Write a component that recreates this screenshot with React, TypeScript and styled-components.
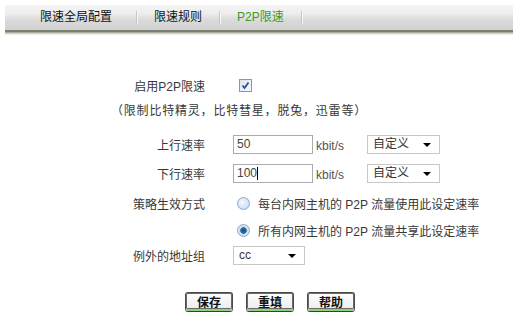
import styled, { createGlobalStyle } from 'styled-components';

const GlobalStyle = createGlobalStyle`
  html, body {
    margin: 0;
    padding: 0;
    background: #ffffff;
  }
  body {
    font-family: "Liberation Sans", "Noto Sans CJK SC", sans-serif;
    font-size: 12px;
    color: #333333;
  }
`;

const Page = styled.div`
  width: 527px;
  height: 335px;
  padding-top: 5px;
  box-sizing: border-box;
  overflow: hidden;
`;

const TabBar = styled.div`
  margin: 0 14px 0 5px;
  height: 25px;
  display: flex;
  align-items: center;
  padding-left: 18px;
  background: linear-gradient(#f6f6f6 0%, #ececec 35%, #dadada 60%, #d2d2d2 100%);
  border-bottom: 2px solid #7c8070;
  box-shadow: 0 1px 0 #a9ad9c, 0 2px 0 #d0d3c6, 0 3px 0 #eceee6;
`;

const Tab = styled.div<{ $active?: boolean }>`
  padding: 0 17px;
  height: 13px;
  line-height: 13px;
  font-size: 12px;
  color: ${({ $active }) => ($active ? '#3c9a22' : '#111111')};
  border-right: 1px solid #c6c6c6;
  box-shadow: 1px 0 0 #f8f8f8;

  &:first-child {
    padding-right: 24px;
  }
`;

const Form = styled.div`
  margin-top: 41px;
  padding-left: 105px;
  display: flex;
  flex-direction: column;
`;

const Row = styled.div<{ $gap?: number }>`
  display: grid;
  grid-template-columns: 100px 1fr;
  column-gap: 28px;
  height: 24px;
  align-items: center;
  margin-top: ${({ $gap }) => $gap ?? 0}px;
`;

const Label = styled.div`
  text-align: right;
  color: #383838;
  white-space: nowrap;
`;

const Note = styled.div`
  height: 24px;
  line-height: 24px;
  margin-top: 2px;
  padding-left: 6px;
  color: #383838;
  letter-spacing: 0.8px;
`;

const Field = styled.div<{ $indent?: number }>`
  display: flex;
  align-items: center;
  padding-left: ${({ $indent }) => $indent ?? 0}px;
`;

const CheckBox = styled.span`
  width: 11px;
  height: 11px;
  border: 1px solid #8a97a5;
  background: linear-gradient(135deg, #dfe4ea, #f8f9fb);
  display: inline-flex;
  align-items: center;
  justify-content: center;
`;

const InputWrap = styled.span`
  position: relative;
  display: inline-flex;
`;

const TextInput = styled.input`
  width: 80px;
  height: 19px;
  box-sizing: border-box;
  border: 1px solid #a7acb0;
  padding: 0 3px;
  font-family: "Liberation Sans", sans-serif;
  font-size: 12px;
  color: #444444;
  outline: none;
`;

const Caret = styled.span`
  position: absolute;
  left: 24px;
  top: 3px;
  width: 1px;
  height: 13px;
  background: #000000;
`;

const Unit = styled.span`
  margin-left: 3px;
  width: 51px;
  color: #555555;
  padding-top: 3px;
`;

const SelectWrap = styled.span<{ $w: number }>`
  position: relative;
  display: inline-flex;
  width: ${({ $w }) => $w}px;

  &::after {
    content: '';
    position: absolute;
    right: 9px;
    top: 8px;
    border-left: 4px solid transparent;
    border-right: 4px solid transparent;
    border-top: 4px solid #000000;
    pointer-events: none;
  }
`;

const Select = styled.select`
  appearance: none;
  width: 100%;
  height: 19px;
  box-sizing: border-box;
  border: 1px solid #c8c8c8;
  background: #ffffff;
  padding: 0 0 0 5px;
  font-family: "Liberation Sans", "Noto Sans CJK SC", sans-serif;
  font-size: 12px;
  color: #333333;
  outline: none;
`;

const Radio = styled.span<{ $checked?: boolean }>`
  width: 11px;
  height: 11px;
  border-radius: 50%;
  border: 1px solid #8fa8c4;
  background: ${({ $checked }) =>
    $checked
      ? 'radial-gradient(circle, #1c4f86 0%, #2a6aa8 38%, #c8dcef 45%, #e8f1fa 100%)'
      : 'radial-gradient(circle at 40% 40%, #f4f9fe 0%, #bcd6ef 100%)'};
  margin-right: 8px;
  flex-shrink: 0;
`;

const RadioText = styled.span`
  color: #383838;
  white-space: nowrap;
`;

const Buttons = styled.div`
  display: flex;
  gap: 13px;
  padding-left: 80px;
  margin-top: 25px;
`;

const Button = styled.button`
  width: 48px;
  height: 19px;
  box-sizing: border-box;
  border: 1px solid #4a4a4a;
  border-radius: 3px;
  border-bottom: 2px solid #8fd07a;
  background: linear-gradient(#ffffff, #ececec);
  font-family: "Noto Sans CJK SC", sans-serif;
  font-size: 12px;
  font-weight: bold;
  color: #111111;
  padding: 0;
  line-height: 15px;
  box-shadow: 0 0 0 1px #6a6a6a inset, 0 1px 0 #3b3b3b;
  cursor: pointer;
`;

export default function App() {
  return (
    <Page>
      <GlobalStyle />
      <TabBar>
        <Tab>限速全局配置</Tab>
        <Tab>限速规则</Tab>
        <Tab $active>P2P限速</Tab>
      </TabBar>

      <Form>
        <Row>
          <Label>启用P2P限速</Label>
          <Field $indent={6}>
            <CheckBox>
              <svg width="9" height="9" viewBox="0 0 9 9">
                <path d="M1.5 4.5 L3.5 7 L7.5 1.5" fill="none" stroke="#2b4fa8" strokeWidth="1.8" />
              </svg>
            </CheckBox>
          </Field>
        </Row>
        <Note>（限制比特精灵，比特彗星，脱兔，迅雷等）</Note>

        <Row $gap={9}>
          <Label>上行速率</Label>
          <Field>
            <TextInput defaultValue="50" />
            <Unit>kbit/s</Unit>
            <SelectWrap $w={73}>
              <Select defaultValue="custom">
                <option value="custom">自定义</option>
              </Select>
            </SelectWrap>
          </Field>
        </Row>
        <Row $gap={5}>
          <Label>下行速率</Label>
          <Field>
            <InputWrap>
              <TextInput defaultValue="100" />
              <Caret />
            </InputWrap>
            <Unit>kbit/s</Unit>
            <SelectWrap $w={73}>
              <Select defaultValue="custom">
                <option value="custom">自定义</option>
              </Select>
            </SelectWrap>
          </Field>
        </Row>

        <Row $gap={6}>
          <Label>策略生效方式</Label>
          <Field $indent={4}>
            <Radio />
            <RadioText>每台内网主机的 P2P 流量使用此设定速率</RadioText>
          </Field>
        </Row>
        <Row $gap={3}>
          <Label />
          <Field $indent={4}>
            <Radio $checked />
            <RadioText>所有内网主机的 P2P 流量共享此设定速率</RadioText>
          </Field>
        </Row>
        <Row $gap={1}>
          <Label>例外的地址组</Label>
          <Field>
            <SelectWrap $w={72}>
              <Select defaultValue="cc">
                <option value="cc">cc</option>
              </Select>
            </SelectWrap>
          </Field>
        </Row>

        <Buttons>
          <Button>保存</Button>
          <Button>重填</Button>
          <Button>帮助</Button>
        </Buttons>
      </Form>
    </Page>
  );
}
